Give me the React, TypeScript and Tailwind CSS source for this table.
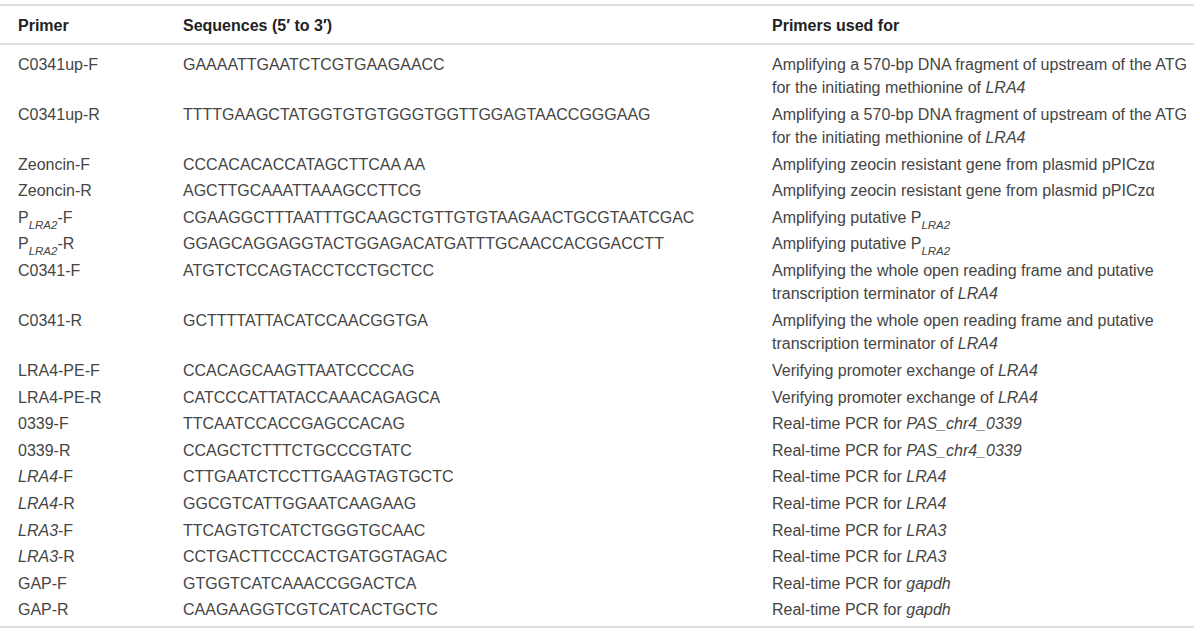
import React from 'react';

type Row = {
    primer: React.ReactNode;
    seq: string;
    use: React.ReactNode;
};

const PLRA2 = (
    <>
        P<sub className="text-[11.5px] italic align-[-3px] leading-none">LRA2</sub>
    </>
);

const rows: Row[] = [
    {
        primer: 'C0341up-F',
        seq: 'GAAAATTGAATCTCGTGAAGAACC',
        use: <>Amplifying a 570-bp DNA fragment of upstream of the ATG<br />for the initiating methionine of <i>LRA4</i></>,
    },
    {
        primer: 'C0341up-R',
        seq: 'TTTTGAAGCTATGGTGTGTGGGTGGTTGGAGTAACCGGGAAG',
        use: <>Amplifying a 570-bp DNA fragment of upstream of the ATG<br />for the initiating methionine of <i>LRA4</i></>,
    },
    { primer: 'Zeoncin-F', seq: 'CCCACACACCATAGCTTCAA AA', use: 'Amplifying zeocin resistant gene from plasmid pPICzα' },
    { primer: 'Zeoncin-R', seq: 'AGCTTGCAAATTAAAGCCTTCG', use: 'Amplifying zeocin resistant gene from plasmid pPICzα' },
    { primer: <>{PLRA2}-F</>, seq: 'CGAAGGCTTTAATTTGCAAGCTGTTGTGTAAGAACTGCGTAATCGAC', use: <>Amplifying putative {PLRA2}</> },
    { primer: <>{PLRA2}-R</>, seq: 'GGAGCAGGAGGTACTGGAGACATGATTTGCAACCACGGACCTT', use: <>Amplifying putative {PLRA2}</> },
    {
        primer: 'C0341-F',
        seq: 'ATGTCTCCAGTACCTCCTGCTCC',
        use: <>Amplifying the whole open reading frame and putative<br />transcription terminator of <i>LRA4</i></>,
    },
    {
        primer: 'C0341-R',
        seq: 'GCTTTTATTACATCCAACGGTGA',
        use: <>Amplifying the whole open reading frame and putative<br />transcription terminator of <i>LRA4</i></>,
    },
    { primer: 'LRA4-PE-F', seq: 'CCACAGCAAGTTAATCCCCAG', use: <>Verifying promoter exchange of <i>LRA4</i></> },
    { primer: 'LRA4-PE-R', seq: 'CATCCCATTATACCAAACAGAGCA', use: <>Verifying promoter exchange of <i>LRA4</i></> },
    { primer: '0339-F', seq: 'TTCAATCCACCGAGCCACAG', use: <>Real-time PCR for <i>PAS_chr4_0339</i></> },
    { primer: '0339-R', seq: 'CCAGCTCTTTCTGCCCGTATC', use: <>Real-time PCR for <i>PAS_chr4_0339</i></> },
    { primer: <><i>LRA4</i>-F</>, seq: 'CTTGAATCTCCTTGAAGTAGTGCTC', use: <>Real-time PCR for <i>LRA4</i></> },
    { primer: <><i>LRA4</i>-R</>, seq: 'GGCGTCATTGGAATCAAGAAG', use: <>Real-time PCR for <i>LRA4</i></> },
    { primer: <><i>LRA3</i>-F</>, seq: 'TTCAGTGTCATCTGGGTGCAAC', use: <>Real-time PCR for <i>LRA3</i></> },
    { primer: <><i>LRA3</i>-R</>, seq: 'CCTGACTTCCCACTGATGGTAGAC', use: <>Real-time PCR for <i>LRA3</i></> },
    { primer: 'GAP-F', seq: 'GTGGTCATCAAACCGGACTCA', use: <>Real-time PCR for <i>gapdh</i></> },
    { primer: 'GAP-R', seq: 'CAAGAAGGTCGTCATCACTGCTC', use: <>Real-time PCR for <i>gapdh</i></> },
];

export default function App() {
    return (
        <div className="w-[1200px] h-[636px] bg-white pt-[4px]">
            <div className="w-[1194px] border-y-2 border-[#dedede] text-[16px] text-[#454545] font-['Liberation_Sans',Arial,sans-serif]">
                {/* header */}
                <div className="grid grid-cols-[183px_589px_422px] h-[39px] pt-[2px] items-center border-b-2 border-[#dedede] font-bold text-[#222]">
                    <div className="pl-[18px]">Primer</div>
                    <div>Sequences (5′ to 3′)</div>
                    <div>Primers used for</div>
                </div>

                {/* body */}
                <div className="pt-[6px] pb-[3px]">
                    {rows.map((r, i) => (
                        <div key={i} className="grid grid-cols-[183px_589px_422px] py-[1.6px] leading-[23.4px] whitespace-nowrap">
                            <div className="pl-[18px]">{r.primer}</div>
                            <div>{r.seq}</div>
                            <div>{r.use}</div>
                        </div>
                    ))}
                </div>
            </div>
        </div>
    );
}
